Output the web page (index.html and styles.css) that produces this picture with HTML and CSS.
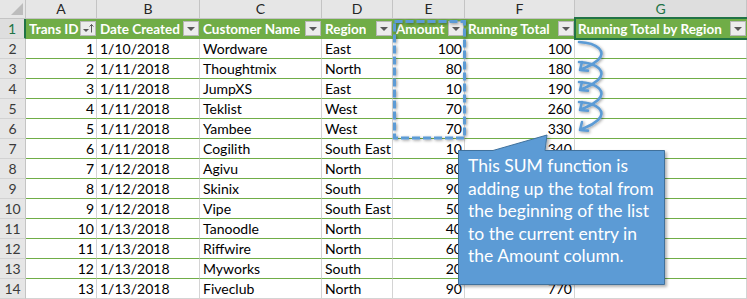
FILE: index.html
```html
<!DOCTYPE html>
<html>
<head>
<meta charset="utf-8">
<link rel="stylesheet" href="styles.css">
</head>
<body>
<div class="sheet">
  <div class="grid">
    <div class="corner"><span class="tri"></span></div>
    <div class="ch">A</div><div class="ch">B</div><div class="ch">C</div><div class="ch">D</div><div class="ch">E</div><div class="ch">F</div><div class="ch ch-sel">G</div>

    <div class="rh rh-sel">1</div>
    <div class="th"><span>Trans ID</span><span class="dd sort"><svg width="14" height="13" viewBox="0 0 14 13"><path d="M2 7h6l-3 3z" fill="#595959"/><path d="M10.5 2.5v8M8.6 4.5l1.9-2 1.9 2" stroke="#595959" stroke-width="1" fill="none"/></svg></span></div>
    <div class="th"><span>Date Created</span><span class="dd"></span></div>
    <div class="th"><span>Customer Name</span><span class="dd"></span></div>
    <div class="th"><span>Region</span><span class="dd"></span></div>
    <div class="th"><span>Amount</span><span class="dd"></span></div>
    <div class="th"><span>Running Total</span><span class="dd"></span></div>
    <div class="th"><span>Running Total by Region</span><span class="dd"></span></div>

    <div class="rh">2</div><div class="c r">1</div><div class="c">1/10/2018</div><div class="c">Wordware</div><div class="c">East</div><div class="c r">100</div><div class="c r">100</div><div class="c"></div>
    <div class="rh">3</div><div class="c r">2</div><div class="c">1/11/2018</div><div class="c">Thoughtmix</div><div class="c">North</div><div class="c r">80</div><div class="c r">180</div><div class="c"></div>
    <div class="rh">4</div><div class="c r">3</div><div class="c">1/11/2018</div><div class="c">JumpXS</div><div class="c">East</div><div class="c r">10</div><div class="c r">190</div><div class="c"></div>
    <div class="rh">5</div><div class="c r">4</div><div class="c">1/11/2018</div><div class="c">Teklist</div><div class="c">West</div><div class="c r">70</div><div class="c r">260</div><div class="c"></div>
    <div class="rh">6</div><div class="c r">5</div><div class="c">1/11/2018</div><div class="c">Yambee</div><div class="c">West</div><div class="c r">70</div><div class="c r">330</div><div class="c"></div>
    <div class="rh">7</div><div class="c r">6</div><div class="c">1/11/2018</div><div class="c">Cogilith</div><div class="c">South East</div><div class="c r">10</div><div class="c r">340</div><div class="c"></div>
    <div class="rh">8</div><div class="c r">7</div><div class="c">1/12/2018</div><div class="c">Agivu</div><div class="c">North</div><div class="c r">80</div><div class="c r">420</div><div class="c"></div>
    <div class="rh">9</div><div class="c r">8</div><div class="c">1/12/2018</div><div class="c">Skinix</div><div class="c">South</div><div class="c r">90</div><div class="c r">510</div><div class="c"></div>
    <div class="rh">10</div><div class="c r">9</div><div class="c">1/12/2018</div><div class="c">Vipe</div><div class="c">South East</div><div class="c r">50</div><div class="c r">560</div><div class="c"></div>
    <div class="rh">11</div><div class="c r">10</div><div class="c">1/13/2018</div><div class="c">Tanoodle</div><div class="c">North</div><div class="c r">40</div><div class="c r">600</div><div class="c"></div>
    <div class="rh">12</div><div class="c r">11</div><div class="c">1/13/2018</div><div class="c">Riffwire</div><div class="c">North</div><div class="c r">60</div><div class="c r">660</div><div class="c"></div>
    <div class="rh">13</div><div class="c r">12</div><div class="c">1/13/2018</div><div class="c">Myworks</div><div class="c">South</div><div class="c r">20</div><div class="c r">680</div><div class="c"></div>
    <div class="rh">14</div><div class="c r last">13</div><div class="c last">1/13/2018</div><div class="c last">Fiveclub</div><div class="c last">North</div><div class="c r last">90</div><div class="c r last">770</div><div class="c last"></div>
  </div>

  <div class="selbox"></div>

  <svg class="overlay" width="747" height="299" viewBox="0 0 747 299">
    <defs>
      <filter id="sh" x="-20%" y="-20%" width="140%" height="140%">
        <feDropShadow dx="1" dy="1" stdDeviation="1.6" flood-color="#000" flood-opacity="0.4"/>
      </filter>
      <filter id="sh2" x="-20%" y="-20%" width="140%" height="140%">
        <feDropShadow dx="2" dy="2" stdDeviation="1.5" flood-color="#000" flood-opacity="0.3"/>
      </filter>
    </defs>
    <rect x="394.5" y="21.5" width="70" height="116.5" fill="none" stroke="#5b9bd5" stroke-width="3" stroke-dasharray="8 3" filter="url(#sh)"/>
    <g fill="none" stroke="#5b9bd5" stroke-width="2.6" stroke-linecap="round" stroke-linejoin="round" filter="url(#sh)">
      <path d="M579 42 C598 43 607 52 598 60 S584 67 580 70 M588 70.6 L580 70 L582 62"/>
      <path d="M579 62 C598 63 607 72 598 80 S584 87 580 90 M588 90.6 L580 90 L582 82"/>
      <path d="M579 82 C598 83 607 92 598 100 S584 107 580 110 M588 110.6 L580 110 L582 102"/>
      <path d="M579 102 C598 103 607 112 598 120 S584 127 580 130 M588 130.6 L580 130 L582 122"/>
    </g>
    <path d="M458.5 150.5 L493 150.5 L547 135 L545 150.5 L664.5 150.5 L664.5 284.5 L458.5 284.5 Z" fill="#5b9bd5" stroke="#41719c" stroke-width="1" filter="url(#sh2)"/>
  </svg>

  <div class="callout-text">This SUM function is adding up the total from the beginning of the list to the current entry in the Amount column.</div>
</div>
</body>
</html>
```

FILE: styles.css
```css
html, body {
  margin: 0;
  padding: 0;
  background: #ffffff;
}

.sheet {
  position: relative;
  width: 747px;
  height: 299px;
  overflow: hidden;
  font-family: "Lato", "Noto Sans", sans-serif;
  font-size: 14px;
  color: #000;
}

.grid {
  display: grid;
  grid-template-columns: 26px 71px 103px 122px 71px 72px 110px 172px;
  grid-template-rows: 19px repeat(14, 20px);
}

.grid > div {
  box-sizing: border-box;
  white-space: nowrap;
  overflow: hidden;
}

.corner {
  position: relative;
  background: #e6e6e6;
  border-right: 1px solid #c4c4c4;
  border-bottom: 1px solid #c4c4c4;
}

.corner .tri {
  position: absolute;
  right: 2px;
  bottom: 3px;
  width: 0;
  height: 0;
  border-left: 12px solid transparent;
  border-bottom: 12px solid #bcbcbc;
}

.ch {
  background: #e6e6e6;
  border-right: 1px solid #c4c4c4;
  border-bottom: 1px solid #c4c4c4;
  text-align: center;
  line-height: 18px;
  color: #262626;
}

.ch-sel {
  background: #dedede;
  color: #217346;
  border-bottom: 1px solid #217346;
}

.rh {
  background: #e6e6e6;
  border-right: 1px solid #c4c4c4;
  border-bottom: 1px solid #d2d2d2;
  text-align: center;
  line-height: 19px;
  color: #3a3a3a;
}

.rh-sel {
  background: #dedede;
  color: #217346;
  border-right: 2px solid #217346;
}

.th {
  display: flex;
  align-items: center;
  background: #70ad47;
  color: #fff;
  font-weight: 700;
  font-size: 13.5px;
  padding-left: 3px;
  border-bottom: 1px solid #70ad47;
}

.th span:first-child {
  overflow: hidden;
}

.dd {
  position: relative;
  flex: none;
  margin-left: auto;
  margin-right: 1px;
  width: 16px;
  height: 15px;
  box-sizing: border-box;
  background: #ececec;
  border: 1px solid #b8b8b8;
}

.dd::after {
  content: "";
  position: absolute;
  left: 3px;
  top: 5px;
  border-left: 4px solid transparent;
  border-right: 4px solid transparent;
  border-top: 4px solid #595959;
}

.dd.sort::after {
  display: none;
}

.dd svg {
  display: block;
}

.c {
  background: #fff;
  border-right: 1px solid #d4d4d4;
  border-bottom: 1px solid #70ad47;
  padding: 0 3px;
  line-height: 19px;
}

.c.last {
  border-bottom: 1px solid #d4d4d4;
}

.r {
  text-align: right;
  padding-right: 2px;
}

.selbox {
  position: absolute;
  left: 574px;
  top: 17px;
  width: 180px;
  height: 23px;
  box-sizing: border-box;
  border: 2px solid #217346;
}

.overlay {
  position: absolute;
  left: 0;
  top: 0;
  pointer-events: none;
}

.callout-text {
  position: absolute;
  left: 459px;
  top: 150px;
  width: 204px;
  padding: 5px 0 0 9px;
  box-sizing: border-box;
  color: #fff;
  font-size: 17.5px;
  line-height: 22.5px;
}
```
